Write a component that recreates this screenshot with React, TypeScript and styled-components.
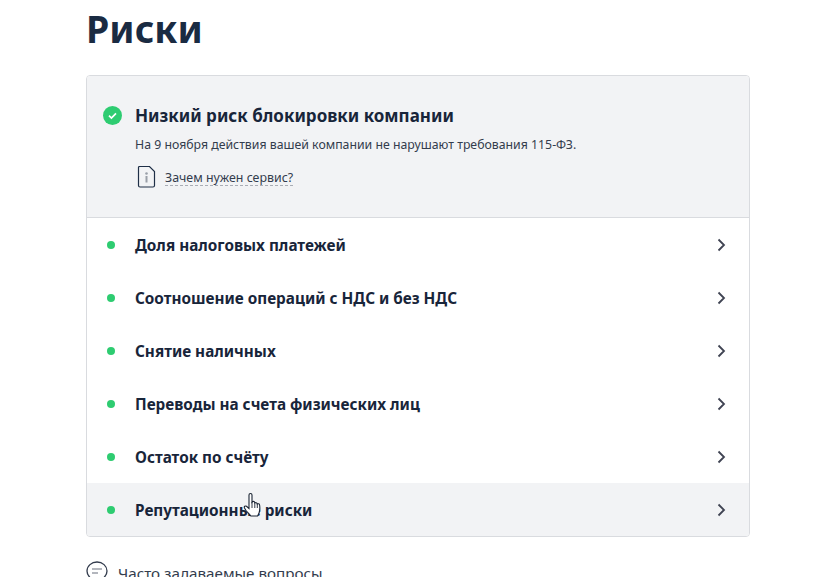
import React from "react";
import styled, { createGlobalStyle } from "styled-components";

const Global = createGlobalStyle`
  html, body { margin: 0; padding: 0; background: #fff; height: 577px; overflow: hidden; }
  body { font-family: "Noto Sans", "Open Sans", sans-serif; color: #1a2b42; }
`;

const Page = styled.main`
  width: 664px;
  padding: 0 0 0 86px;
  display: flex;
  flex-direction: column;
`;

const Title = styled.h1`
  margin: 0;
  height: 75px;
  font-size: 37.5px;
  line-height: 58px;
  font-weight: 700;
  color: #1a2b42;
`;

const Card = styled.section`
  box-sizing: border-box;
  width: 664px;
  height: 462px;
  border: 1px solid #d9dbdf;
  border-radius: 4px;
  overflow: hidden;
  display: flex;
  flex-direction: column;
`;

const Summary = styled.header`
  box-sizing: border-box;
  height: 142px;
  background: #f2f3f5;
  border-bottom: 1px solid #d9dbdf;
  padding: 27px 0 0 16px;
  display: grid;
  grid-template-columns: 32px 1fr;
  align-content: start;
`;

const CheckWrap = styled.div`
  width: 19px;
  height: 19px;
  margin-top: 3px;
`;

const SummaryTitle = styled.h2`
  margin: 0;
  font-size: 17px;
  line-height: 25px;
  font-weight: 700;
  color: #18253a;
`;

const SummaryText = styled.p`
  grid-column: 2;
  margin: 8px 0 0;
  font-size: 12.3px;
  line-height: 18px;
  color: #333c4d;
`;

const HelpRow = styled.div`
  grid-column: 2;
  margin: 11px 0 0 2px;
  display: flex;
  align-items: center;
  gap: 9px;
`;

const HelpLink = styled.a`
  font-size: 12.4px;
  line-height: 15px;
  margin-top: 2px;
  color: #333c4d;
  border-bottom: 1px dashed #a9adb5;
`;

const Row = styled.div<{ $hover?: boolean }>`
  flex: 1;
  display: grid;
  grid-template-columns: 28px 1fr 34px;
  align-items: center;
  padding-left: 20px;
  background: ${(p) => (p.$hover ? "#f2f3f5" : "#fff")};
`;

const Dot = styled.span`
  width: 8px;
  height: 8px;
  border-radius: 50%;
  background: #2ecc71;
`;

const RowLabel = styled.span`
  font-size: 15.3px;
  line-height: 20px;
  font-weight: 700;
  color: #18253a;
`;

const Faq = styled.div`
  margin-top: 24px;
  display: flex;
  align-items: flex-start;
  gap: 8px;
`;

const FaqText = styled.a`
  font-size: 15.2px;
  line-height: 20px;
  margin-top: 2px;
  color: #333c4d;
`;

const Cursor = styled.svg`
  position: absolute;
  left: 243px;
  top: 492px;
`;

const rows = [
  "Доля налоговых платежей",
  "Соотношение операций с НДС и без НДС",
  "Снятие наличных",
  "Переводы на счета физических лиц",
  "Остаток по счёту",
  "Репутационные риски",
];

const Chevron = () => (
  <svg width="12" height="14" viewBox="0 0 12 14" fill="none">
    <path d="M3.500 1.500 9 7 3.500 12.500" stroke="#3f4352" strokeWidth="1.800" />
  </svg>
);

export default function App() {
  return (
    <>
      <Global />
      <Page>
        <Title>Риски</Title>
        <Card>
          <Summary>
            <CheckWrap>
              <svg width="19" height="19" viewBox="0 0 19 19" fill="none">
                <circle cx="9.5" cy="9.5" r="9.5" fill="#2ecc71" />
                <path d="M6 9.7 8.4 12 13 7.4" stroke="#fff" strokeWidth="1.7" />
              </svg>
            </CheckWrap>
            <SummaryTitle>Низкий риск блокировки компании</SummaryTitle>
            <SummaryText>На 9 ноября действия вашей компании не нарушают требования 115-ФЗ.</SummaryText>
            <HelpRow>
              <svg width="19" height="23" viewBox="0 0 19 23" fill="none">
                <path d="M1.500 2.500a1 1 0 0 1 1-1h10l5 5v14a1.500 1.500 0 0 1-1.500 1.500h-13a1.500 1.500 0 0 1-1.500-1.500z" stroke="#1f2f47" strokeWidth="1.200" />
                <circle cx="9.500" cy="8.500" r="1.300" fill="#9a9fa8" />
                <rect x="8.500" y="11" width="2" height="6.500" fill="#9a9fa8" />
              </svg>
              <HelpLink>Зачем нужен сервис?</HelpLink>
            </HelpRow>
          </Summary>
          {rows.map((r, i) => (
            <Row key={r} $hover={i === 5}>
              <Dot />
              <RowLabel>{r}</RowLabel>
              <Chevron />
            </Row>
          ))}
        </Card>
        <Faq>
          <svg width="24" height="22" viewBox="0 0 24 22" fill="none">
            <path d="M17 15l5 5h-7z" fill="#9a9fa8" />
            <ellipse cx="11" cy="10" rx="10" ry="9" stroke="#333c4d" strokeWidth="1.300" fill="#fff" />
            <path d="M6 8h10M6 12h6" stroke="#9a9fa8" strokeWidth="1.500" />
          </svg>
          <FaqText>Часто задаваемые вопросы</FaqText>
        </Faq>
      </Page>
      <Cursor width="21" height="26" viewBox="0 0 21 26">
        <path
          d="M6 3c0-2 3-2 3 0v7.200l.4-.5c.9-.6 2.200-.2 2.300 1l.1.2c.8-.6 2.100-.3 2.300.8l.1.3c.9-.6 2.200-.1 2.400 1 .4 2.700.3 5.500-.5 7.700-.4 1.100-1 2.100-1.500 3.300H7.800C6.400 22 4.500 20.400 3 18.500L1.500 16c-.8-1.400.8-2.600 2-1.700L6 16.500z"
          fill="#fff"
          stroke="#1b2433"
          strokeWidth="1.100"
        />
        <path d="M9 10v6M11.800 11v5M14.300 12v4" stroke="#1b2433" strokeWidth=".9" />
      </Cursor>
    </>
  );
}
